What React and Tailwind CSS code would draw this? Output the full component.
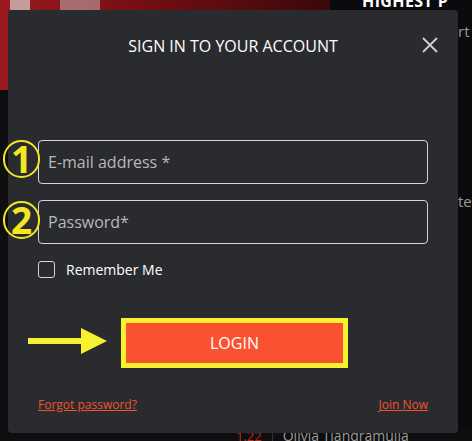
import React from "react";

function Circled({ n }) {
  return (
    <div className="w-[37px] h-[38px] rounded-full border-[2px] border-[#f3e623] flex items-center justify-center text-[#f3e623] font-bold text-[37px] leading-none" style={{ fontFamily: '"Noto Sans", sans-serif' }}>
      <span className="-mt-[2px]">{n}</span>
    </div>
  );
}

function Field({ label }) {
  return (
    <div className="h-[44px] rounded-[4px] border border-[#d6d6d6] flex items-center pl-[9px] text-[#b9b9b9] text-[16px]">{label}</div>
  );
}

export default function App() {
  return (
    <div className="relative w-[472px] h-[441px] overflow-hidden bg-[#0e0e10] flex flex-col" style={{ fontFamily: '"Open Sans", "Noto Sans", sans-serif' }}>
      {/* background page behind modal */}
      <div className="flex-1 flex min-h-0">
        <div className="w-[330px] shrink-0 flex flex-col">
          <div className="h-[90px] bg-gradient-to-r from-[#9a1a1e] via-[#6e0d12] to-[#3a080a] flex gap-[30px] pl-[10px]">
            <div className="w-[20px] h-[10px] bg-[#d8d4d4] opacity-70" />
            <div className="w-[40px] h-[10px] bg-[#c8c4c4] opacity-50" />
          </div>
          <div className="flex-1 bg-[#0e0e10]" />
        </div>
        <div className="flex-1 min-w-0 bg-[#0b0b0d] flex flex-col">
          <div className="pl-[32px] -mt-[11px] text-white font-bold text-[16px] tracking-wide whitespace-nowrap">HIGHEST P</div>
          <div className="pl-[128px] mt-[7px] text-[#9a9a9a] text-[15px]">rt</div>
          <div className="pl-[128px] mt-[147px] text-[#9a9a9a] text-[15px] whitespace-nowrap">tes</div>
        </div>
      </div>
      <div className="h-[12px] shrink-0 flex items-start pl-[236px] gap-[10px] bg-[#0e0e10]">
        <span className="text-[#b4301c] text-[13px] leading-[18px] -mt-[2px]">1.22</span>
        <div className="w-px h-[12px] bg-[#333] mt-[2px]" />
        <span className="text-[#9a9a9a] text-[14px] leading-[18px] -mt-[2px] whitespace-nowrap">Olivia Tjandramulia</span>
      </div>

      {/* modal */}
      <div className="absolute left-[8px] top-[10px] w-[450px] h-[423px] rounded-[4px] bg-[#2a2b2f] flex flex-col">
        <div className="relative h-[70px] flex items-center justify-center pt-[1px]">
          <span className="text-white text-[16px]">SIGN IN TO YOUR ACCOUNT</span>
          <svg className="absolute right-[20px] top-[27px]" width="16" height="16" viewBox="0 0 16 16">
            <path d="M1 1L15 15M15 1L1 15" stroke="#d0d0d0" strokeWidth="1.8" />
          </svg>
        </div>
        <div className="px-[30px] pt-[60px] flex flex-col gap-[16px]">
          <Field label="E-mail address *" />
          <Field label="Password*" />
        </div>
        <div className="pl-[30px] mt-[15px] flex items-center gap-[11px]">
          <div className="w-[17px] h-[17px] rounded-[3px] border border-[#d6d6d6]" />
          <span className="text-white text-[14px]">Remember Me</span>
        </div>
        <div className="mt-[38px] flex justify-center">
          <div className="w-[227px] h-[50px] bg-[#f8f12f] p-[5px] ml-[3px]">
            <div className="w-full h-full bg-[#fa5230] flex items-center justify-center text-white text-[16px]">LOGIN</div>
          </div>
        </div>
        <div className="mt-[28px] px-[30px] flex justify-between text-[12px] text-[#f2522f]">
          <span className="underline">Forgot password?</span>
          <span className="underline">Join Now</span>
        </div>
      </div>

      {/* annotations */}
      <div className="absolute left-[3px] top-[140px] flex flex-col gap-[23px]">
        <Circled n="1" />
        <Circled n="2" />
      </div>
      <svg className="absolute left-[26px] top-[326px]" width="84" height="30" viewBox="0 0 84 30">
        <rect x="2" y="12" width="56" height="6" fill="#f8f12f" />
        <polygon points="55,2 81,15 55,28" fill="#f8f12f" />
      </svg>
    </div>
  );
}
